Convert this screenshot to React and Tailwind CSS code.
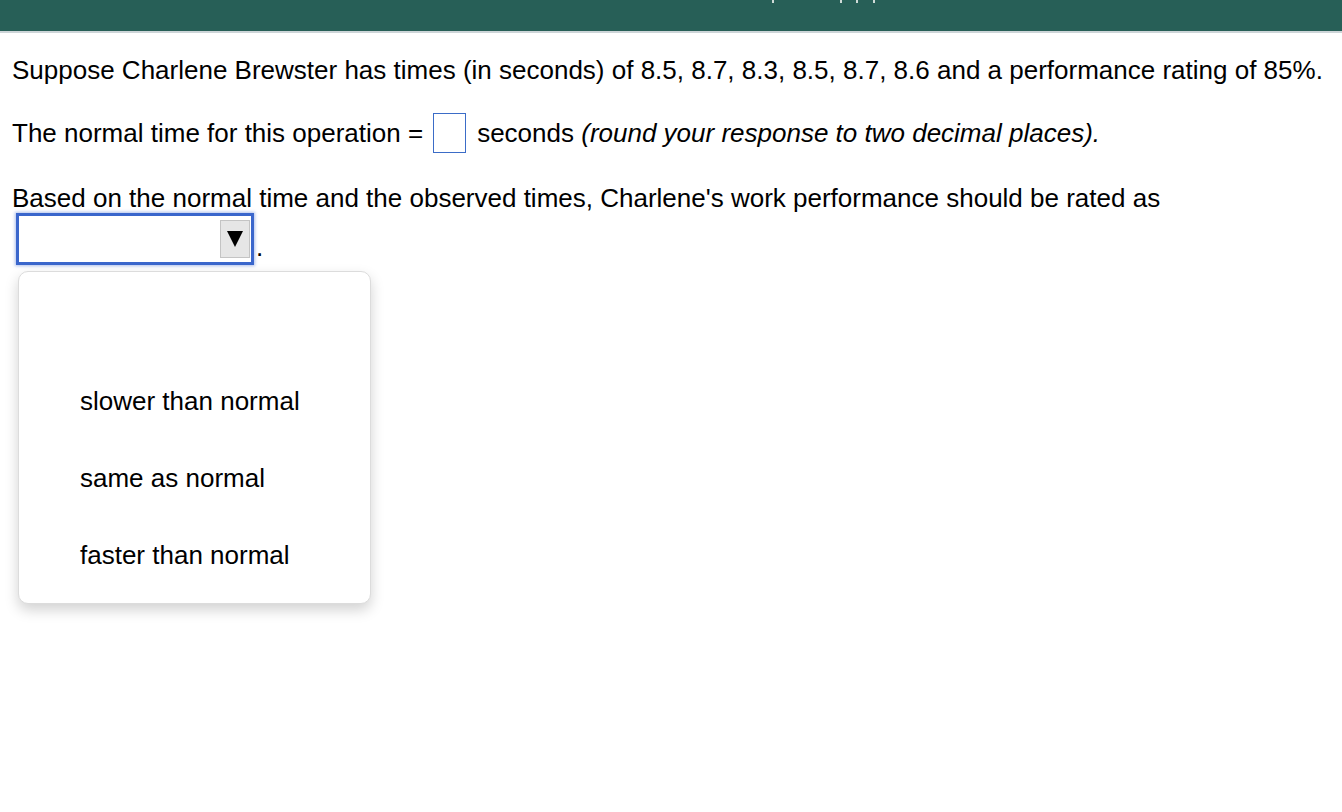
export default function App() {
  return (
    <div className="w-[1342px] h-[812px] bg-white overflow-hidden" style={{ fontFamily: '"Liberation Sans", Arial, sans-serif' }}>
      <div className="h-[31px] bg-[#275f57] relative">
        <div className="absolute top-0 left-[772px] w-[2px] h-[3px] bg-[#cfdad7]"></div>
        <div className="absolute top-0 left-[840px] w-[2px] h-[3px] bg-[#cfdad7]"></div>
        <div className="absolute top-0 left-[856px] w-[2px] h-[3px] bg-[#cfdad7]"></div>
        <div className="absolute top-0 left-[873px] w-[2px] h-[3px] bg-[#cfdad7]"></div>
      </div>
      <div className="h-[2px] bg-[#cdd5d8]"></div>
      <div className="pl-[12px] text-[26px] text-black leading-[30px]">
        <p className="mt-[22px] whitespace-nowrap">Suppose Charlene Brewster has times (in seconds) of 8.5, 8.7, 8.3, 8.5, 8.7, 8.6 and a performance rating of 85%.</p>
        <div className="mt-[28px] flex items-center h-[40px] whitespace-nowrap">
          <span>The normal time for this operation =</span>
          <span className="ml-[10px] w-[33px] h-[40px] border-[1.5px] border-[#3b6cc7] inline-block"></span>
          <span className="ml-[11px]">seconds <i>(round your response to two decimal places).</i></span>
        </div>
        <p className="mt-[30px] whitespace-nowrap">Based on the normal time and the observed times, Charlene's work performance should be rated as</p>
        <div className="relative">
          <div className="ml-[4px] flex items-end">
            <div className="w-[238px] h-[52px] border-[3px] border-[#3a66cc] shadow-[0_0_3px_1px_rgba(70,110,210,0.45)] bg-white flex items-center justify-end pr-[1px]">
              <div className="w-[30px] h-[38px] bg-[#e6e6e6] border border-[#c4c4c4] flex items-center justify-center">
                <svg width="18" height="18" viewBox="0 0 18 18"><polygon points="1,1 17,1 9,17" fill="#000" /></svg>
              </div>
            </div>
            <span className="ml-[2px] mb-[8px] leading-[20px]">.</span>
          </div>
          <div className="absolute left-[6px] top-[58px] w-[353px] h-[333px] bg-white rounded-[10px] border border-[#dcdcdc] shadow-[0_6px_14px_rgba(0,0,0,0.18)]">
            <div className="pl-[61px] pt-[114px] flex flex-col gap-[47px]">
              <span>slower than normal</span>
              <span>same as normal</span>
              <span>faster than normal</span>
            </div>
          </div>
        </div>
      </div>
    </div>
  );
}
